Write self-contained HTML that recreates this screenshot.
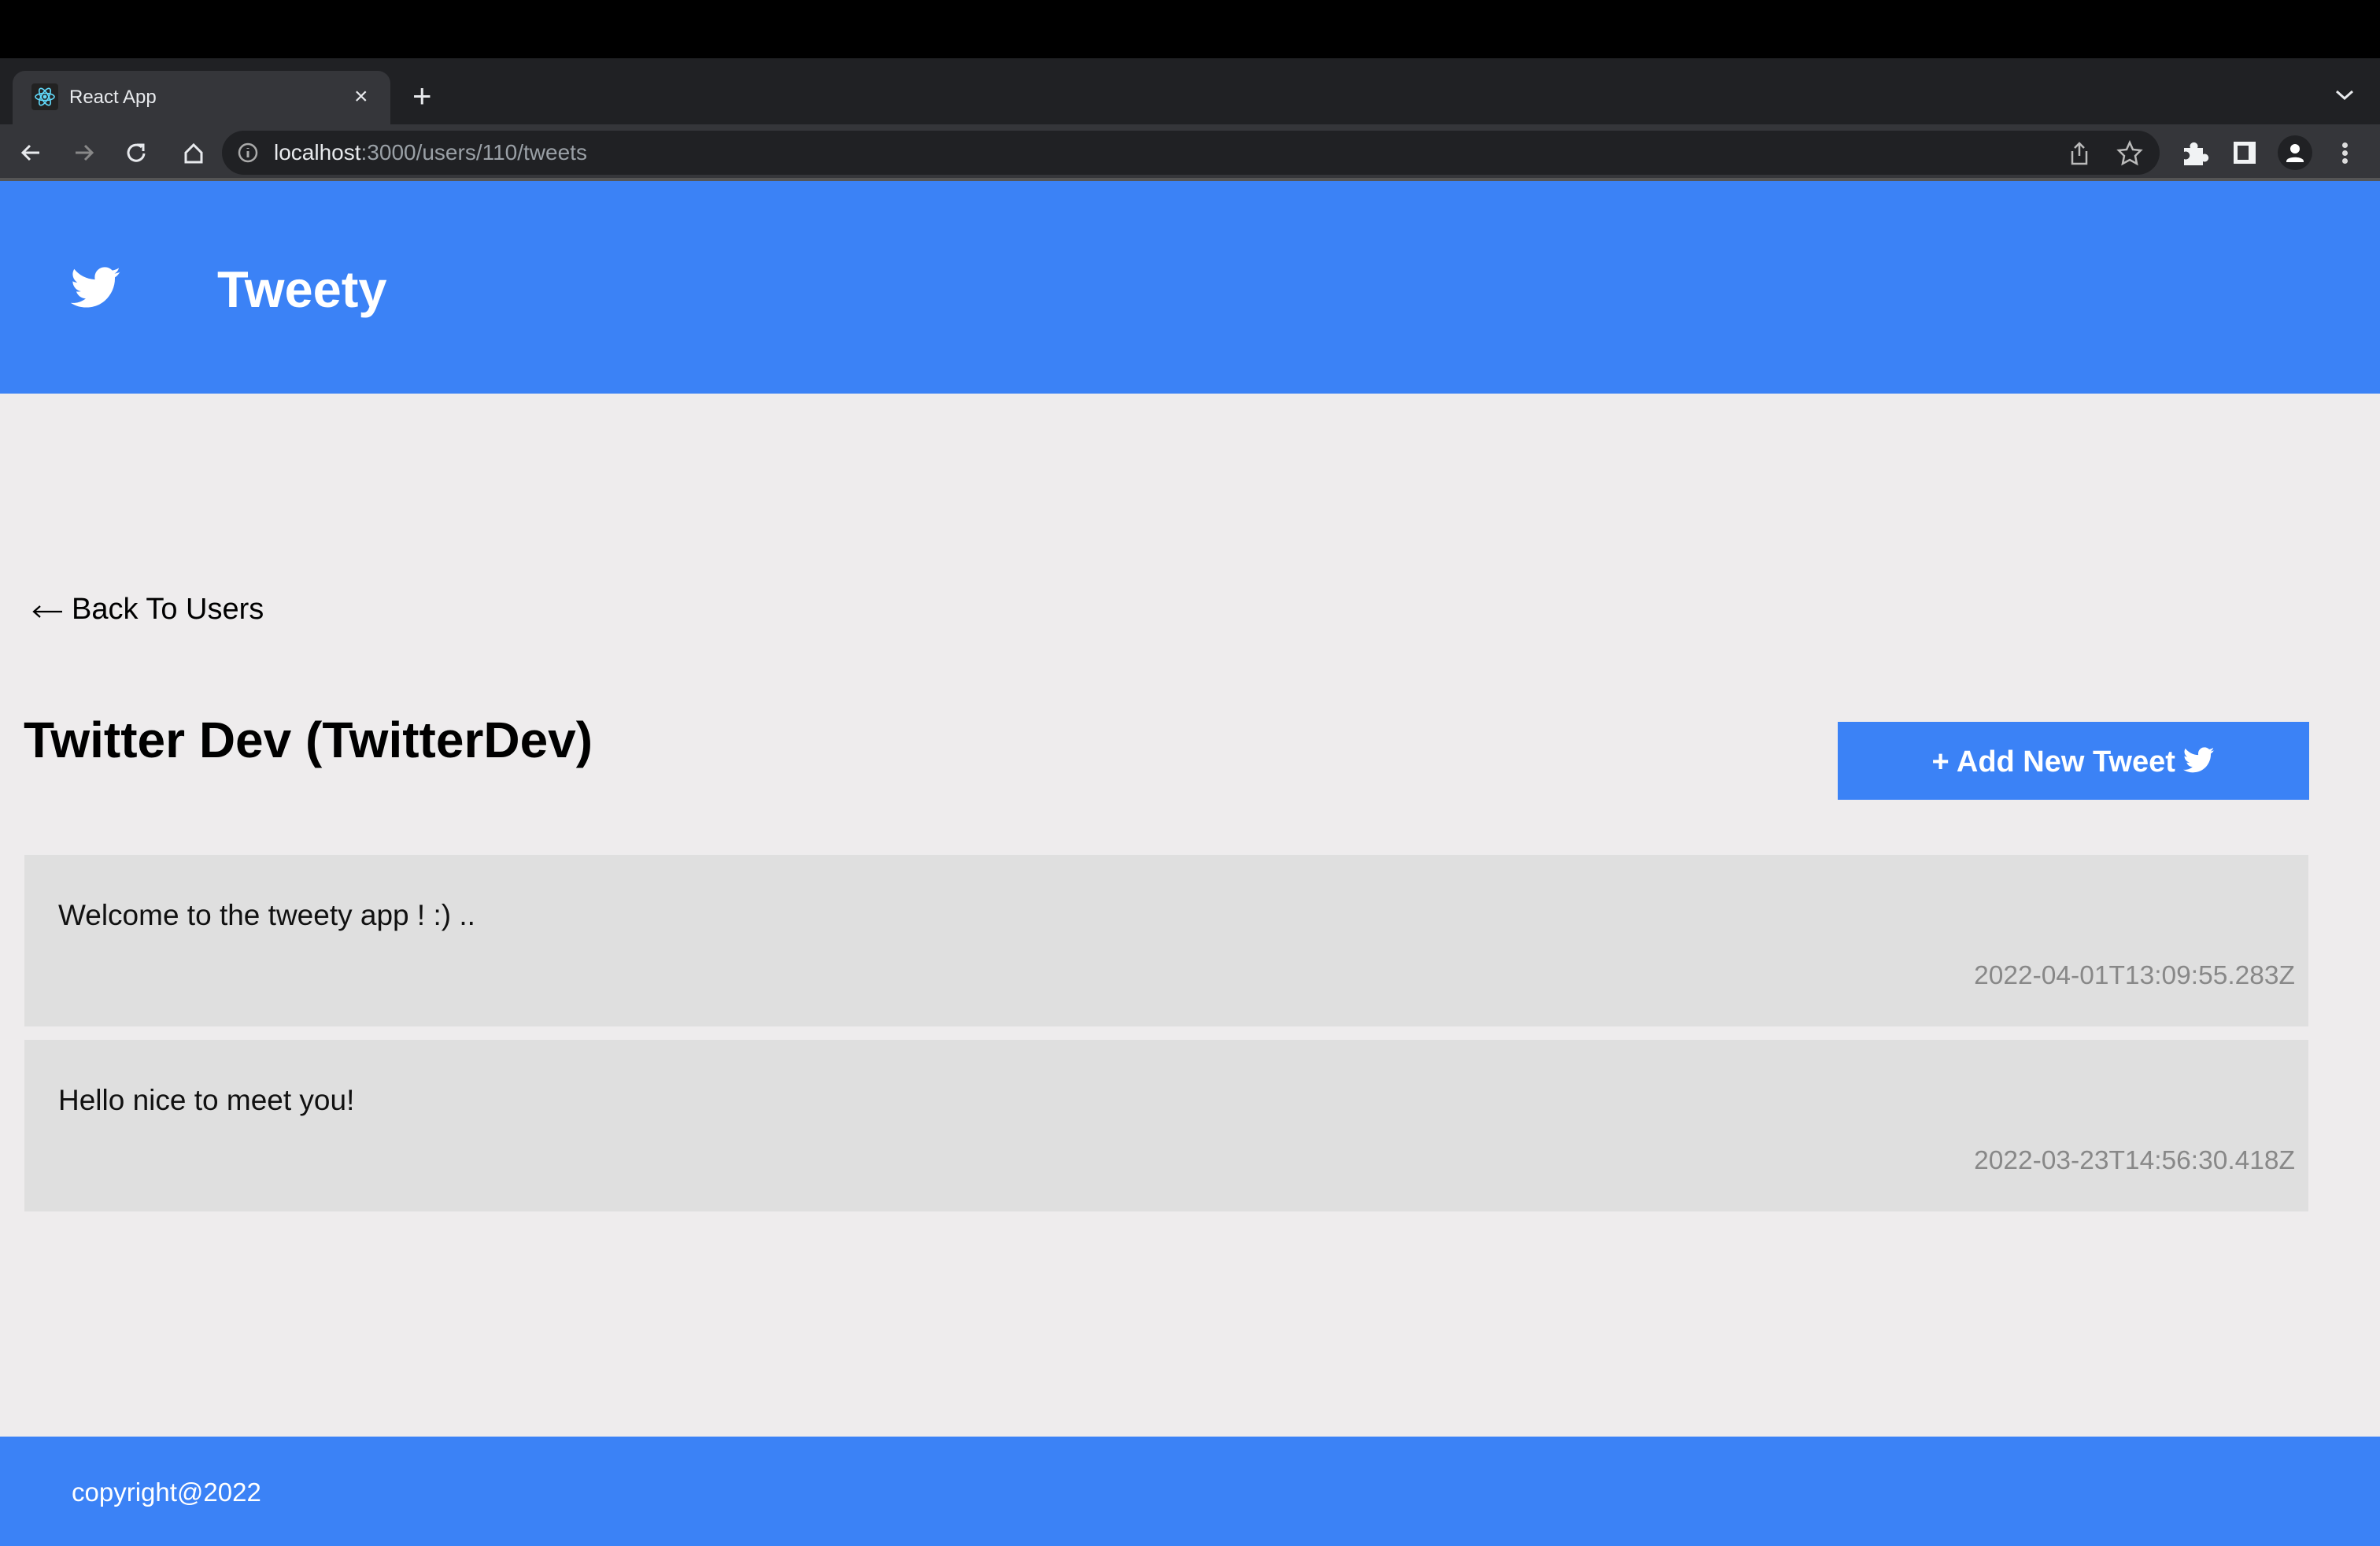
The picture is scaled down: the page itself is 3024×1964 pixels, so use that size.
<!DOCTYPE html>
<html><head><meta charset="utf-8"><style>
*{margin:0;padding:0;box-sizing:border-box}
body{width:3024px;height:1964px;position:relative;background:#eeeced;font-family:"Liberation Sans",Arial,sans-serif;overflow:hidden}
.a{position:absolute}
.t{white-space:nowrap}
</style></head><body>
<div class="a" style="left:0;top:0;width:3024px;height:74px;background:#000"></div>
<div class="a" style="left:0;top:74px;width:3024px;height:84px;background:#202124"></div>
<div class="a" style="left:16px;top:90px;width:480px;height:70px;background:#35363a;border-radius:16px 16px 0 0"></div>
<div class="a" style="left:0;top:158px;width:3024px;height:70px;background:#35363a"></div>
<div class="a" style="left:0;top:226px;width:3024px;height:4px;background:#555"></div>
<!-- tab -->
<div class="a" style="left:40px;top:106px;width:34px;height:34px;background:#222;border-radius:4px"></div>
<svg class="a" style="left:42px;top:108px" width="30" height="30" viewBox="-15 -15 30 30"><g fill="none" stroke="#61dafb" stroke-width="1.6"><ellipse rx="12" ry="4.6"/><ellipse rx="12" ry="4.6" transform="rotate(60)"/><ellipse rx="12" ry="4.6" transform="rotate(120)"/></g><circle r="2.4" fill="#61dafb"/></svg>
<div class="a t" style="left:88px;top:107px;font-size:24px;color:#e8eaed;line-height:34px">React App</div>
<div class="a t" style="left:450px;top:106px;font-size:30px;color:#e8eaed;line-height:34px">×</div>
<div class="a t" style="left:524px;top:100px;font-size:42px;color:#e8eaed;line-height:44px">+</div>
<svg class="a" style="left:2966px;top:112px" width="26" height="18" viewBox="0 0 26 18"><path d="M3 4l10 9 10-9" stroke="#e8eaed" stroke-width="3" fill="none"/></svg>
<!-- nav -->
<svg class="a" style="left:24px;top:178px" width="240" height="32" viewBox="0 0 240 32"><g fill="none" stroke-width="3"><path d="M26 16H6M14 7l-9 9 9 9" stroke="#e8eaed"/><path d="M72 16h20M84 7l9 9-9 9" stroke="#888"/><path d="M156 9a10 10 0 1 0 3 8" stroke="#e8eaed"/><path d="M150 6h8v8" stroke="#e8eaed"/><path d="M212 16l10-10 10 10v12h-20z" stroke="#e8eaed"/></g></svg>
<div class="a" style="left:282px;top:166px;width:2462px;height:56px;background:#202124;border-radius:28px"></div>
<svg class="a" style="left:302px;top:181px" width="26" height="26" viewBox="0 0 26 26"><circle cx="13" cy="13" r="11" stroke="#aaa" stroke-width="2.5" fill="none"/><path d="M13 11v8M13 7v1" stroke="#aaa" stroke-width="3"/></svg>
<div class="a t" style="left:348px;top:176px;font-size:28px;line-height:36px;color:#e8eaed">localhost<span style="color:#9aa0a6">:3000/users/110/tweets</span></div>
<svg class="a" style="left:2628px;top:178px" width="240" height="34" viewBox="0 0 240 34"><g fill="none" stroke="#bbb" stroke-width="2.5"><path d="M5 14v16h18V14M14 4v16M8 10l6-6 6 6"/><path d="M78 3l4 9 10 1-7 7 2 10-9-5-9 5 2-10-7-7 10-1z"/></g></svg>
<svg class="a" style="left:2772px;top:178px" width="36" height="34" viewBox="0 0 36 34"><path d="M3 10h8a5 5 0 1 1 9 0h7v8a5 5 0 1 1 0 9v5H3v-8a5 5 0 1 0 0-9z" fill="#f1f3f4"/></svg>
<div class="a" style="left:2838px;top:180px;width:28px;height:28px;background:#f1f3f4"></div>
<div class="a" style="left:2843px;top:185px;width:14px;height:18px;background:#35363a"></div>
<div class="a" style="left:2894px;top:172px;width:44px;height:44px;background:#202124;border-radius:50%"></div>
<svg class="a" style="left:2900px;top:178px" width="32" height="32" viewBox="0 0 32 32"><circle cx="16" cy="11" r="6" fill="#fff"/><path d="M5 27c0-7 22-7 22 0v1H5z" fill="#fff"/></svg>
<div class="a" style="left:2976px;top:181px;width:7px;height:7px;border-radius:50%;background:#ddd;box-shadow:0 10px 0 #ddd,0 20px 0 #ddd"></div>
<!-- header -->
<div class="a" style="left:0;top:230px;width:3024px;height:270px;background:#3b82f6"></div>
<svg class="a" style="left:90px;top:338px" width="64" height="56" viewBox="0 0 24 20"><path fill="#fff" d="M23.6 2.3c-.9.4-1.8.6-2.8.8 1-.6 1.8-1.5 2.1-2.7-.9.6-2 1-3.1 1.2C18.9.6 17.6 0 16.2 0c-2.7 0-4.8 2.2-4.8 4.8 0 .4 0 .8.1 1.1C7.4 5.7 3.9 3.8 1.6.9c-.4.7-.7 1.6-.7 2.4 0 1.7.9 3.2 2.2 4-.8 0-1.5-.2-2.2-.6v.1c0 2.3 1.7 4.3 3.9 4.7-.4.1-.8.2-1.3.2-.3 0-.6 0-.9-.1.6 1.9 2.4 3.3 4.5 3.4-1.7 1.3-3.7 2.1-6 2.1-.4 0-.8 0-1.2-.1 2.1 1.4 4.7 2.2 7.4 2.2 8.9 0 13.7-7.4 13.7-13.7v-.6c1-.7 1.8-1.5 2.4-2.6z"/></svg>
<div class="a t" style="left:276px;top:330px;font-size:65px;font-weight:bold;color:#fff;line-height:76px">Tweety</div>
<!-- content -->
<svg class="a" style="left:40px;top:764px" width="40" height="24" viewBox="0 0 40 24"><path d="M39 13H4M11 6l-8 7 8 7" stroke="#000" stroke-width="2.2" fill="none"/></svg>
<div class="a t" style="left:91px;top:750px;font-size:38px;color:#000;line-height:48px">Back To Users</div>
<div class="a t" style="left:30px;top:900px;font-size:64px;font-weight:bold;color:#000;line-height:80px">Twitter Dev (TwitterDev)</div>
<div class="a" style="left:2335px;top:917px;width:599px;height:99px;background:#3b82f6"></div>
<div class="a t" style="left:2335px;top:919px;width:599px;height:99px;text-align:center;font-size:38px;font-weight:bold;color:#fff;line-height:99px">+ Add New Tweet <svg width="40" height="34" viewBox="0 0 24 20" style="vertical-align:-3px"><path fill="#fff" d="M23.6 2.3c-.9.4-1.8.6-2.8.8 1-.6 1.8-1.5 2.1-2.7-.9.6-2 1-3.1 1.2C18.9.6 17.6 0 16.2 0c-2.7 0-4.8 2.2-4.8 4.8 0 .4 0 .8.1 1.1C7.4 5.7 3.9 3.8 1.6.9c-.4.7-.7 1.6-.7 2.4 0 1.7.9 3.2 2.2 4-.8 0-1.5-.2-2.2-.6v.1c0 2.3 1.7 4.3 3.9 4.7-.4.1-.8.2-1.3.2-.3 0-.6 0-.9-.1.6 1.9 2.4 3.3 4.5 3.4-1.7 1.3-3.7 2.1-6 2.1-.4 0-.8 0-1.2-.1 2.1 1.4 4.7 2.2 7.4 2.2 8.9 0 13.7-7.4 13.7-13.7v-.6c1-.7 1.8-1.5 2.4-2.6z"/></svg></div>
<div class="a" style="left:31px;top:1086px;width:2902px;height:218px;background:#dfdfdf"></div>
<div class="a t" style="left:74px;top:1140px;font-size:37px;color:#111;line-height:46px">Welcome to the tweety app ! :) ..</div>
<div class="a t" style="right:108px;top:1219px;font-size:33.5px;color:#888;line-height:42px">2022-04-01T13:09:55.283Z</div>
<div class="a" style="left:31px;top:1321px;width:2902px;height:218px;background:#dfdfdf"></div>
<div class="a t" style="left:74px;top:1375px;font-size:37px;color:#111;line-height:46px">Hello nice to meet you!</div>
<div class="a t" style="right:108px;top:1454px;font-size:33.5px;color:#888;line-height:42px">2022-03-23T14:56:30.418Z</div>
<!-- footer -->
<div class="a" style="left:0;top:1825px;width:3024px;height:139px;background:#3b82f6"></div>
<div class="a t" style="left:91px;top:1875px;font-size:33px;color:#fff;line-height:42px">copyright@2022</div>
</body></html>
